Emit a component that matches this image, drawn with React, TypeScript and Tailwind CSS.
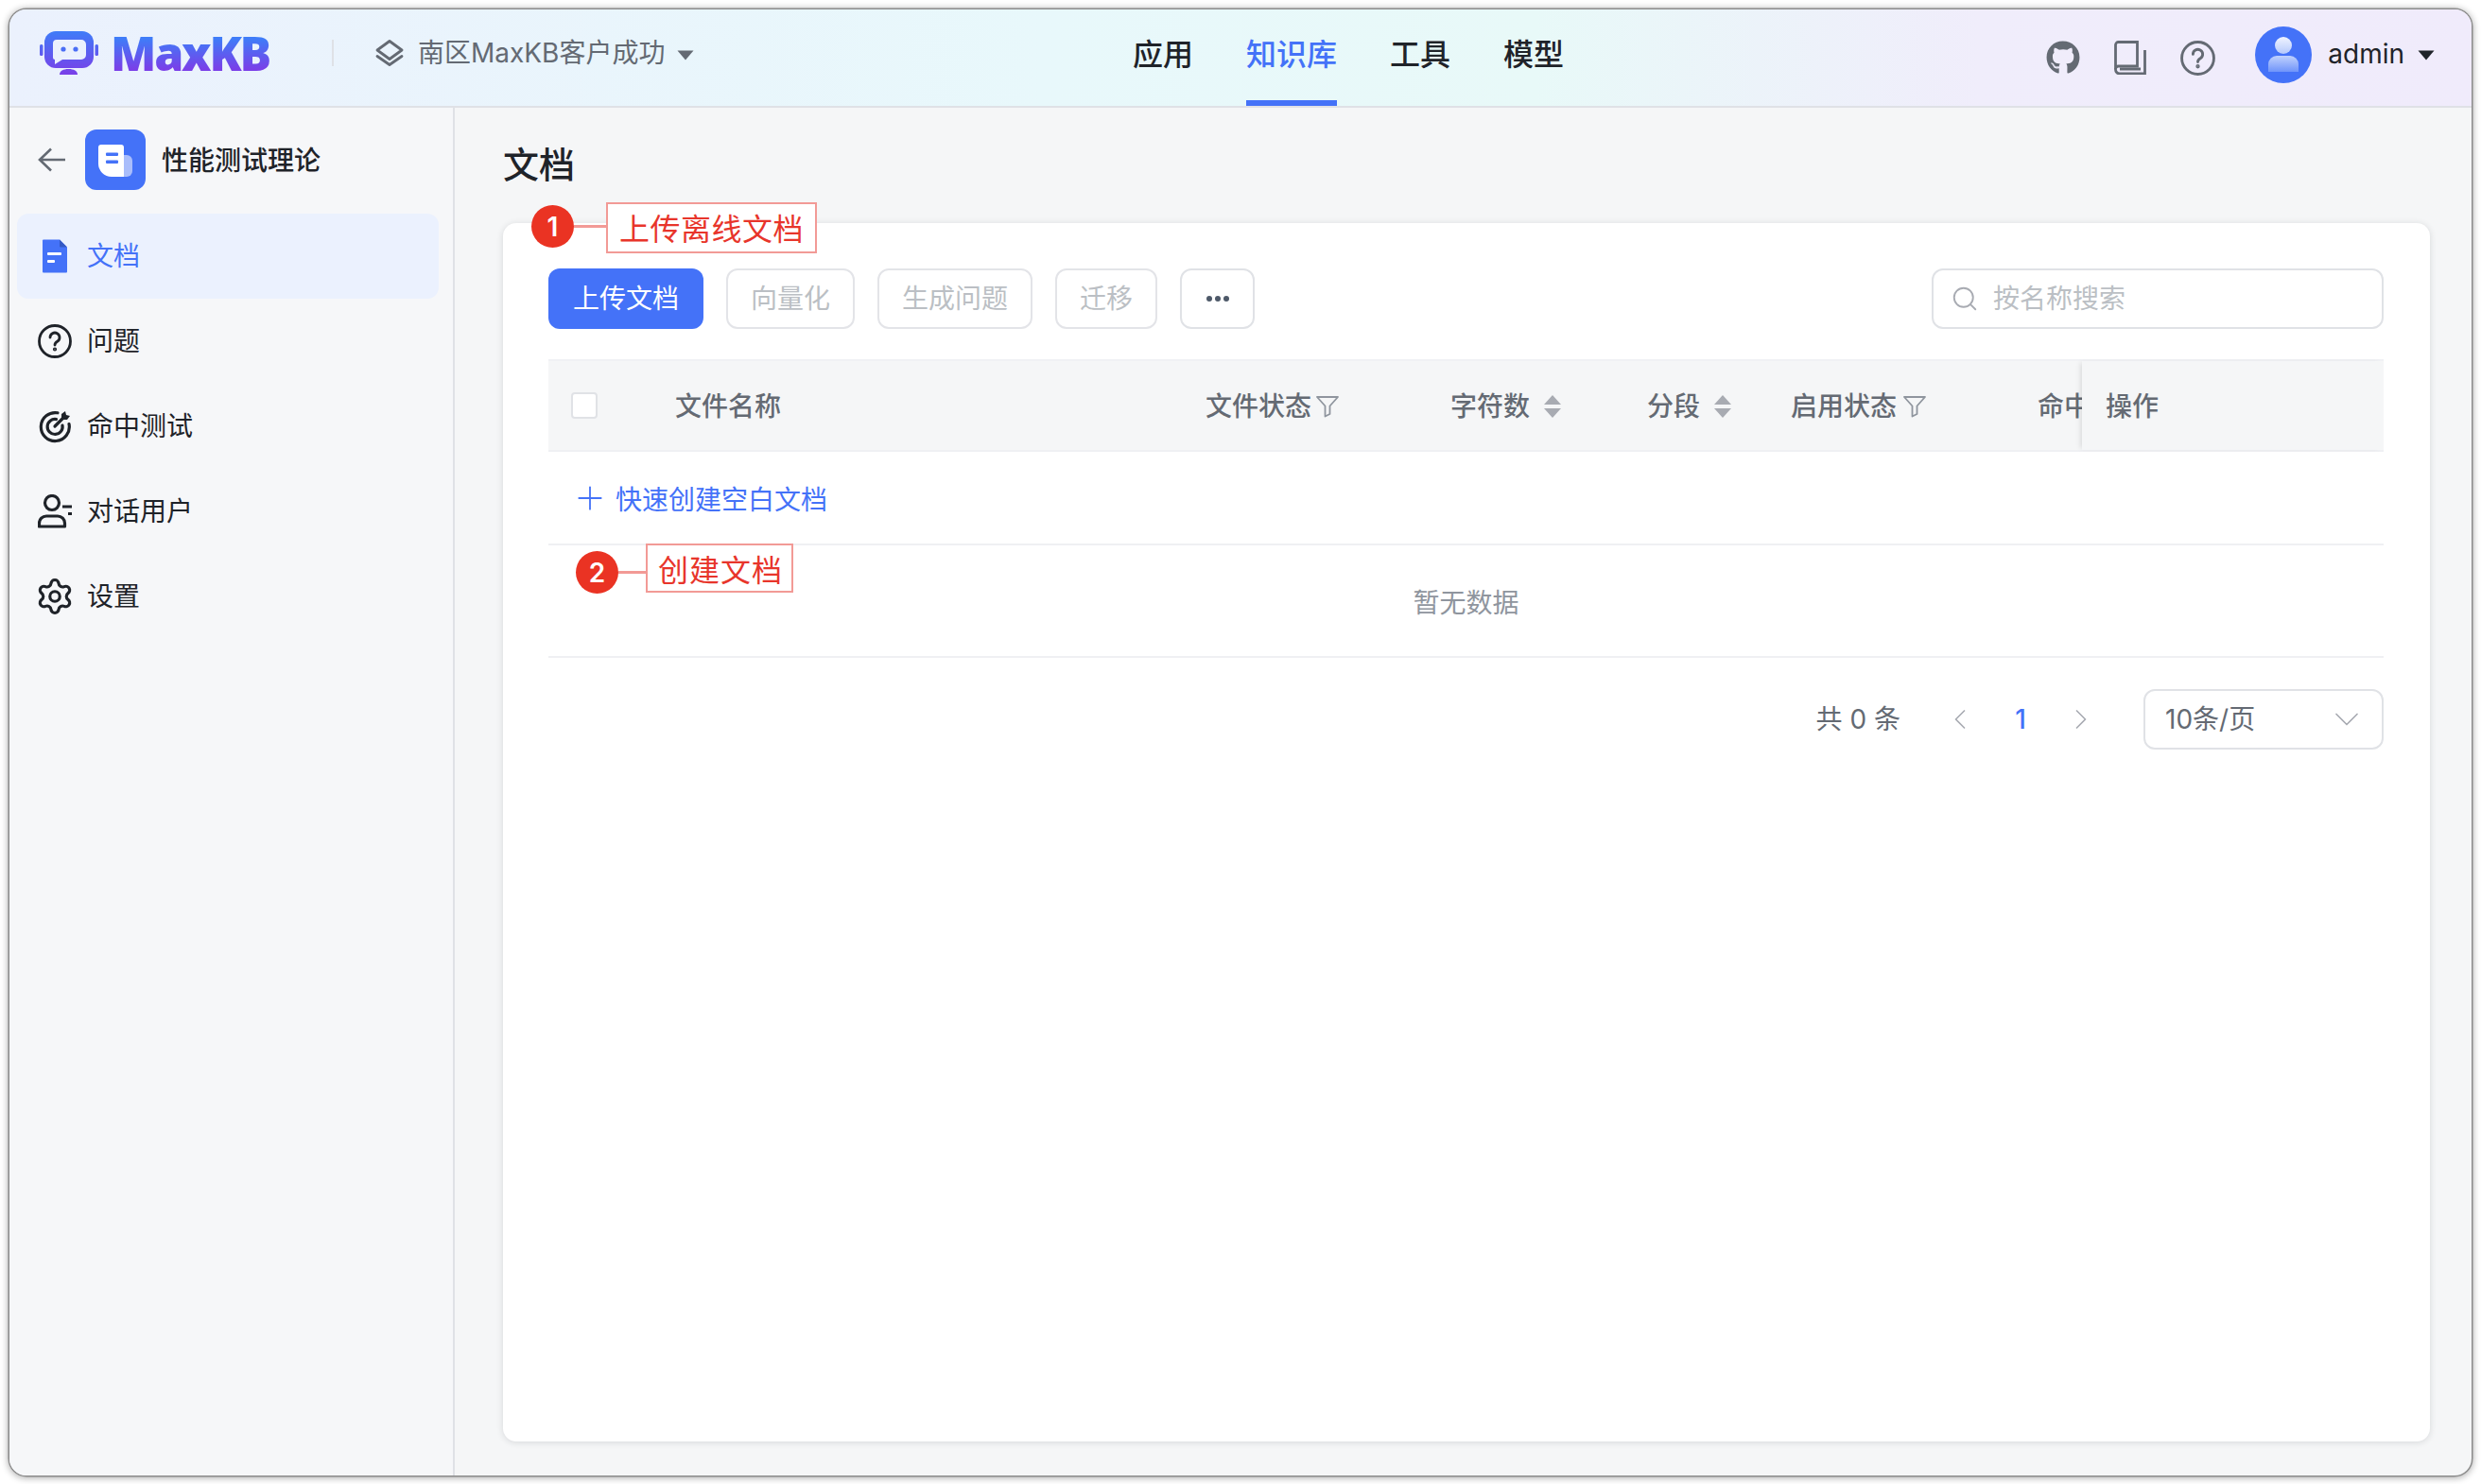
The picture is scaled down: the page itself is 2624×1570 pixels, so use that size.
import React from "react";
import { ChevronDown, ChevronLeft, ChevronRight, Plus, Search, Settings } from "lucide-react";
import { FaGithub } from "react-icons/fa";

const font = { fontFamily: '"Inter", "Noto Sans CJK SC", sans-serif' };

const Caret = ({ className }: { className: string }) => (
  <svg width="18" height="11" viewBox="0 0 18 11" className={className}>
    <path d="M0.5 0.5h17L9 10.5z" fill="currentColor" />
  </svg>
);

const Logo = () => (
  <svg width="62" height="46" viewBox="0 0 62 46" className="shrink-0">
    <defs>
      <linearGradient id="logoFill" x1="0" y1="0" x2="0" y2="46" gradientUnits="userSpaceOnUse">
        <stop offset="0" stopColor="#3f7cf8" />
        <stop offset="1" stopColor="#7a3fe8" />
      </linearGradient>
    </defs>
    <rect x="5" y="0" width="52" height="39" rx="12" fill="url(#logoFill)" />
    <path d="M18 9h26a5 5 0 0 1 5 5v11a5 5 0 0 1-5 5H24l-8 5v-5a2 2 0 0 1-2-2V13a4 4 0 0 1 4-4z" fill="#ebf1fd" />
    <circle cx="25" cy="19" r="2.6" fill="#4a6ef5" />
    <circle cx="38" cy="19" r="2.6" fill="#4a6ef5" />
    <rect x="0" y="14" width="3.5" height="12" rx="1.5" fill="url(#logoFill)" />
    <rect x="58.5" y="14" width="3.5" height="12" rx="1.5" fill="url(#logoFill)" />
    <path d="M21 46c0-4 4-6 9.5-6s9.5 2 9.5 6z" fill="url(#logoFill)" />
  </svg>
);

const LayersIcon = () => (
  <svg width="32" height="28" viewBox="0 0 32 28" fill="none" stroke="#646a73" strokeWidth="2.8" strokeLinejoin="round" strokeLinecap="round">
    <path d="M16 1.5 29 11 16 20.5 3 11z" />
    <path d="M3 17.5 16 26.5 29 17.5" />
  </svg>
);

const BookIcon = () => (
  <svg width="34" height="36" viewBox="0 0 34 36" fill="none" stroke="#646a73" strokeWidth="2.8">
    <path d="M1.5 29V4.5a3 3 0 0 1 3-3h20v25.5H4.5a3 3 0 0 0-3 3 4.500 4.500 0 0 0 4.500 5h26.500V10" />
    <path d="M6 30h22" />
  </svg>
);

const HelpIcon = ({ color, size }: { color: string; size: number }) => (
  <svg width={size} height={size} viewBox="0 0 36 36" fill="none" stroke={color} strokeWidth="2.8" strokeLinecap="round">
    <circle cx="18" cy="18" r="16.500" />
    <path d="M13 14a5 5 0 1 1 7.600 4.300c-1.700 1-2.600 1.800-2.600 3.700" />
    <circle cx="18" cy="26.500" r="0.700" fill={color} />
  </svg>
);

const BackArrow = () => (
  <svg width="29" height="26" viewBox="0 0 29 26" fill="none" stroke="#646a73" strokeWidth="2.6" className="shrink-0">
    <path d="M14 1.500 2 13l12 11.500M2 13h27" />
  </svg>
);

const Avatar = () => (
  <svg width="60" height="60" viewBox="0 0 60 60" className="shrink-0">
    <defs>
      <linearGradient id="avatarHead" x1="0" y1="0" x2="0" y2="1">
        <stop offset="0" stopColor="#f0f4ff" />
        <stop offset="1" stopColor="#b5c9fc" />
      </linearGradient>
      <linearGradient id="avatarBody" x1="0" y1="0" x2="0" y2="1">
        <stop offset="0" stopColor="#c0d1fd" />
        <stop offset="1" stopColor="#6f94fa" />
      </linearGradient>
    </defs>
    <circle cx="30" cy="30" r="30" fill="#4472f8" />
    <circle cx="30" cy="20" r="9" fill="url(#avatarHead)" />
    <path d="M14 48V40a9 9 0 0 1 9-9h14a9 9 0 0 1 9 9v8z" fill="url(#avatarBody)" />
  </svg>
);

const FileTile = () => (
  <div className="flex h-16 w-16 shrink-0 items-center justify-center rounded-xl bg-[#4472f8]">
    <svg width="64" height="64" viewBox="0 0 64 64">
      <path d="M41 27h3a6 6 0 0 1 6 6v11a6 6 0 0 1-6 6h-3z" fill="#a9bdfb" />
      <path d="M14 19a3 3 0 0 1 3-3h21a3 3 0 0 1 3 3v31H28A14 14 0 0 1 14 36z" fill="#fff" />
      <rect x="22" y="24.500" width="13" height="3.500" rx="1" fill="#4472f8" />
      <rect x="22" y="32.500" width="13" height="3.500" rx="1" fill="#4472f8" />
    </svg>
  </div>
);

const DocIcon = () => (
  <svg width="36" height="36" viewBox="0 0 36 36">
    <path d="M5 1.500a1 1 0 0 1 1-1h17l8 8v26a1 1 0 0 1-1 1H6a1 1 0 0 1-1-1z" fill="#4472f8" />
    <path d="M23 0.500l8 8h-7a1 1 0 0 1-1-1z" fill="#3358c4" />
    <rect x="10" y="14" width="15" height="3" rx="1" fill="#fff" />
    <rect x="10" y="22" width="8" height="3" rx="1" fill="#fff" />
  </svg>
);

const TargetIcon = () => (
  <svg width="36" height="36" viewBox="0 0 36 36" fill="none" stroke="#1f2329" strokeWidth="3.2" strokeLinecap="round">
    <path d="M21 3.800A15 15 0 1 0 33 15.500" />
    <path d="M19.500 10.600A8 8 0 1 0 26 17" />
    <path d="M18 18 27 9" />
    <path d="M25 9V5l4-3 1 4 4 1-3 4h-4z" fill="#1f2329" stroke="none" />
  </svg>
);

const UserIcon = () => (
  <svg width="36" height="36" viewBox="0 0 36 36" fill="none" stroke="#1f2329" strokeWidth="3.2">
    <circle cx="15" cy="9" r="7.500" />
    <path d="M1.500 34v-3.500A7.500 7.500 0 0 1 9 23h12a7.500 7.500 0 0 1 7.500 7.500V34z" strokeLinejoin="round" />
    <path d="M26 13h10M32 20.500h4" />
  </svg>
);

const FilterIcon = () => (
  <svg width="24" height="24" viewBox="0 0 24 24" fill="none" stroke="#8f959e" strokeWidth="1.800" strokeLinejoin="round" className="shrink-0">
    <path d="M1 2h22l-8.500 9.500V20l-5 2.500v-11z" />
  </svg>
);

const SortIcon = () => (
  <svg width="20" height="24" viewBox="0 0 20 24" className="shrink-0">
    <path d="M10 0l9 10H1z" fill="#a8abb2" />
    <path d="M10 24l9-10H1z" fill="#a8abb2" />
  </svg>
);

const Callout = ({ n, text, className, boxClass, circleClass, lineClass }: { n: number; text: string; className: string; boxClass: string; circleClass: string; lineClass: string }) => (
  <div className={`absolute flex items-start ${className}`}>
    <div className={`flex h-[45px] w-[45px] shrink-0 items-center justify-center rounded-full bg-[#ea3323] text-[28px] font-semibold text-white ${circleClass}`}>{n}</div>
    <div className={`h-[3px] shrink-0 bg-[#f29a96] ${lineClass}`} />
    <div className={`flex shrink-0 items-center justify-center whitespace-nowrap border-2 border-[#f29a96] bg-white text-[32px] leading-none text-[#e8352b] ${boxClass}`}>{text}</div>
  </div>
);

const navItems = ["应用", "知识库", "工具", "模型"];
const sideItems = [
  { label: "文档", icon: <DocIcon />, active: true },
  { label: "问题", icon: <HelpIcon color="#1f2329" size={36} /> },
  { label: "命中测试", icon: <TargetIcon /> },
  { label: "对话用户", icon: <UserIcon /> },
  { label: "设置", icon: <Settings size={42} strokeWidth={1.8} color="#1f2329" className="-mx-[3px]" /> },
];

export default function App() {
  return (
    <div className="h-[1570px] w-[2624px] overflow-hidden bg-white pl-[10px] pt-[10px]" style={font}>
      <div className="flex h-[1551px] w-[2604px] flex-col overflow-hidden rounded-[18px] bg-[#f5f6f7] shadow-[0_0_0_1.5px_#8c8c8c,0_1px_7px_2px_rgba(0,0,0,0.3)]">
        <header className="flex h-[104px] shrink-0 items-stretch border-b-2 border-[#dfe1e6] bg-[linear-gradient(90deg,#ebf1fd_0%,#e8f8fb_42%,#e8f9f8_62%,#f0edfb_80%,#f0ebfb_100%)]">
          <div className="flex w-[1188px] shrink-0 items-center pb-[10px] pl-[32px]">
            <Logo />
            <span className="ml-[13px] w-[172px] whitespace-nowrap bg-[linear-gradient(180deg,#3f7cf8_20%,#7a3fe8_85%)] bg-clip-text text-[50px] font-extrabold leading-none tracking-[-2.2px] text-transparent" style={{ fontFamily: '"Open Sans", sans-serif' }}>MaxKB</span>
            <div className="ml-[62px] h-7 w-0.5 bg-[#dfe1e6]" />
            <div className="ml-[43px]"><LayersIcon /></div>
            <span className="ml-[14px] text-[28px] text-[#646a73]">南区MaxKB客户成功</span>
            <Caret className="ml-[13px] mt-1 text-[#646a73]" />
          </div>
          <nav className="flex gap-[56px]">
            {navItems.map((item) => (
              <div key={item} className={`flex items-center border-b-[6px] pb-[4px] pt-[4px] text-[32px] font-medium ${item === "知识库" ? "border-[#4472f8] text-[#4472f8]" : "border-transparent text-[#1f2329]"}`}>{item}</div>
            ))}
          </nav>
          <div className="ml-auto flex items-center pb-[6px] pr-[39px]">
            <div className="mt-[6px] flex items-center">
              <FaGithub size={36} color="#646a73" />
              <div className="ml-[36px]"><BookIcon /></div>
              <div className="ml-[36px]"><HelpIcon color="#646a73" size={37} /></div>
            </div>
            <div className="ml-[42px]"><Avatar /></div>
            <span className="ml-[17px] -mt-[2px] text-[28px] text-[#1f2329]">admin</span>
            <Caret className="ml-[14px] text-[#1f2329]" />
          </div>
        </header>

        <div className="flex min-h-0 flex-1">
          <aside className="w-[471px] shrink-0 border-r-2 border-[#dfe1e6] bg-[#f6f7f9] pl-[8px] pr-[15px] pt-[23px]">
            <div className="flex items-center pl-[22px]">
              <BackArrow />
              <div className="ml-[21px]"><FileTile /></div>
              <span className="ml-[17px] pt-[2px] text-[28px] font-medium text-[#1f2329]">性能测试理论</span>
            </div>
            <div className="mt-[25px]">
              {sideItems.map((item) => (
                <div key={item.label} className={`flex h-[90px] items-center gap-[16px] rounded-xl pl-[22px] text-[28px] ${item.active ? "bg-[#ebf1fe] text-[#4472f8]" : "text-[#1f2329]"}`}>
                  <div className="flex w-9 shrink-0 justify-center">{item.icon}</div>
                  <span>{item.label}</span>
                </div>
              ))}
            </div>
          </aside>

          <main className="flex min-w-0 flex-1 flex-col pb-[36px] pl-[51px] pr-[44px] pt-[32px]">
            <h1 className="mb-[34px] h-14 text-[38px] font-medium leading-[56px] text-[#1f2329]">文档</h1>
            <section className="relative flex-1 rounded-[14px] bg-white pl-[48px] pr-[49px] pt-[48px] shadow-[0_1px_7px_rgba(31,35,41,0.14)]">
              <Callout n={1} text="上传离线文档" className="-top-[22px] left-[30px]" circleClass="mt-[3px]" lineClass="mt-[24px] w-[34px]" boxClass="h-[54px] w-[223px] pt-[4px] tracking-[0.5px]" />
              <Callout n={2} text="创建文档" className="top-[339px] left-[77px]" circleClass="mt-[8px]" lineClass="mt-[29px] w-[29px]" boxClass="h-[52px] w-[156px] pl-[2px] pt-[5px] tracking-[1px]" />

              <div className="flex items-center gap-6 text-[28px]">
                <button className="h-16 w-[164px] rounded-xl bg-[#4472f8] text-white">上传文档</button>
                {["向量化", "生成问题", "迁移"].map((b) => (
                  <button key={b} className="h-16 rounded-xl border-2 border-[#e3e4e8] bg-white px-6 text-[#bbbfc4]">{b}</button>
                ))}
                <button className="flex h-16 w-[79px] items-center justify-center gap-[3px] rounded-xl border-2 border-[#e0e2e6] bg-white">
                  <span className="h-[6px] w-[6px] rounded-full bg-[#4e5969]" />
                  <span className="h-[6px] w-[6px] rounded-full bg-[#4e5969]" />
                  <span className="h-[6px] w-[6px] rounded-full bg-[#4e5969]" />
                </button>
                <div className="ml-auto flex h-16 w-[478px] items-center rounded-xl border-2 border-[#e0e2e6] pl-[18px] text-[#bbbfc4]">
                  <Search size={30} strokeWidth={1.5} color="#a8abb2" className="shrink-0" />
                  <span className="ml-[15px]">按名称搜索</span>
                </div>
              </div>

              <div className="mt-8 flex h-[98px] items-center border-b-2 border-t-2 border-[#eff0f3] border-t-[#f0f1f4] bg-[#f5f6f7] text-[28px] font-medium text-[#646a73]">
                <div className="w-[134px] shrink-0 pl-6">
                  <div className="h-7 w-7 rounded border-2 border-[#e0e2e6] bg-white" />
                </div>
                <div className="w-[561px] shrink-0 pt-[2px]">文件名称</div>
                <div className="flex w-[259px] shrink-0 items-center gap-[5px] pt-[2px]">文件状态<FilterIcon /></div>
                <div className="flex w-[208px] shrink-0 items-center gap-[14px] pt-[2px]">字符数<SortIcon /></div>
                <div className="flex w-[152px] shrink-0 items-center gap-[14px] pt-[2px]">分段<SortIcon /></div>
                <div className="flex w-[261px] shrink-0 items-center gap-[7px] pt-[2px]">启用状态<FilterIcon /></div>
                <div className="w-[47px] shrink-0 overflow-hidden whitespace-nowrap pt-[2px]">命中</div>
                <div className="flex h-full flex-1 items-center bg-[#f5f6f7] pl-[25px] pt-[2px] shadow-[-4px_0_5px_-2px_rgba(0,0,0,0.1)]">操作</div>
              </div>

              <div className="flex h-[99px] items-center border-b-2 border-[#eff0f3] pl-[24px] text-[28px] text-[#4472f8]">
                <Plus size={40} strokeWidth={1.1} className="shrink-0" />
                <span className="ml-[7px] pt-[4px]">快速创建空白文档</span>
              </div>

              <div className="flex h-[119px] items-center justify-center border-b-2 border-[#eff0f3] pt-[4px] text-[28px] text-[#8f959e]">暂无数据</div>

              <div className="mt-[33px] flex items-center justify-end text-[28px] text-[#646a73]">
                <span className="mr-[31px] whitespace-pre">共 0 条</span>
                <div className="flex w-16 justify-center"><ChevronLeft size={36} strokeWidth={1.1} color="#a8abb2" /></div>
                <div className="flex w-16 justify-center font-medium text-[#4472f8]">1</div>
                <div className="flex w-16 justify-center"><ChevronRight size={36} strokeWidth={1.1} color="#a8abb2" /></div>
                <div className="ml-[34px] flex h-16 w-[254px] items-center justify-between rounded-xl border-2 border-[#e0e2e6] pl-[21px] pr-[15px]">
                  <span>10条/页</span>
                  <ChevronDown size={44} strokeWidth={0.9} color="#a8abb2" />
                </div>
              </div>
            </section>
          </main>
        </div>
      </div>
    </div>
  );
}
